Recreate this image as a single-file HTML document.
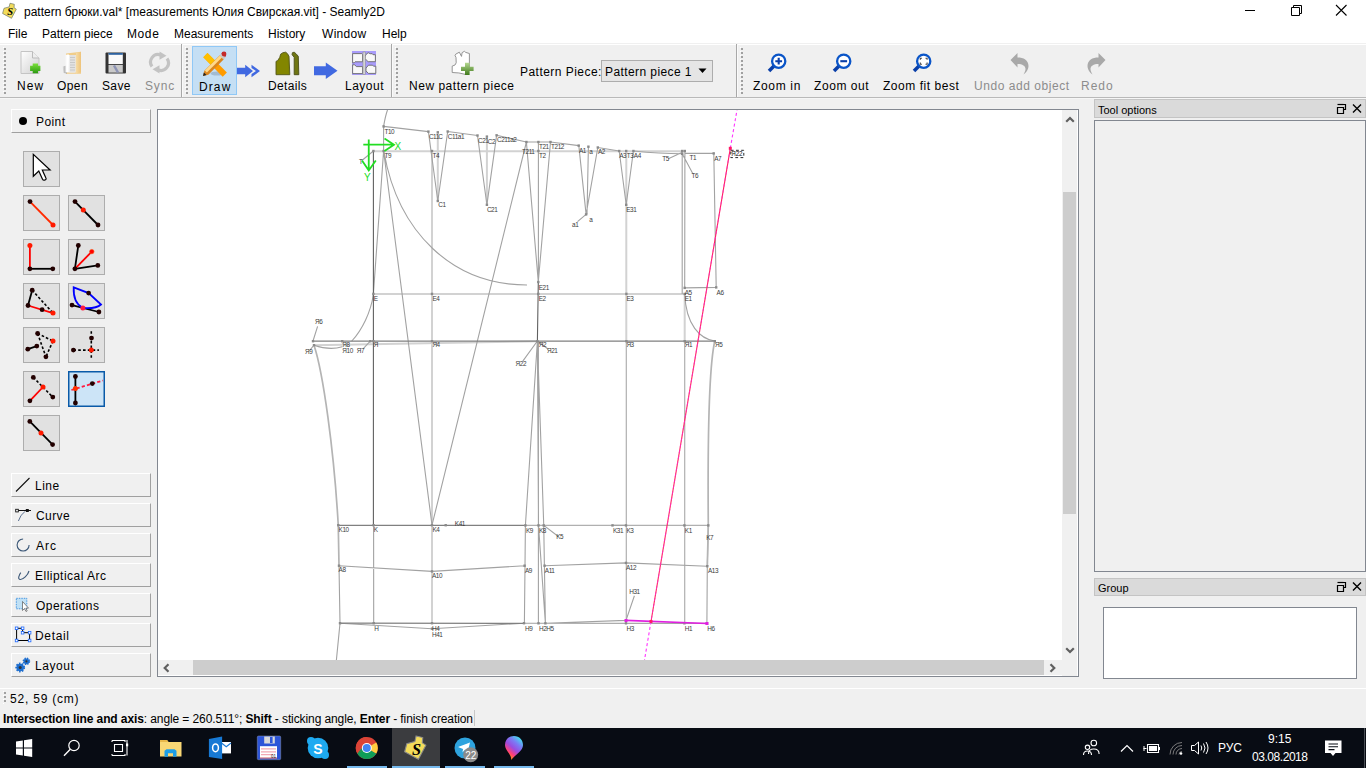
<!DOCTYPE html>
<html><head><meta charset="utf-8">
<style>
*{margin:0;padding:0;box-sizing:border-box}
html,body{width:1366px;height:768px;overflow:hidden;background:#f0f0f0;font-family:"Liberation Sans",sans-serif;font-size:12px;color:#000}
.a{position:absolute}
.t{position:absolute;white-space:nowrap;line-height:14px}
.btn{position:absolute;background:#f0f0f0;border-top:1px solid #fff;border-left:1px solid #fff;border-right:1px solid #a0a0a0;border-bottom:1px solid #a0a0a0}
.tb{position:absolute;width:37px;height:36px;background:#e1e1e1;border:1px solid #adadad}
.grip{position:absolute;width:3px;background-image:linear-gradient(135deg,#fff 0 1px,transparent 1px),linear-gradient(#a0a0a0 0 2px,transparent 2px);background-size:3px 4px,3px 4px;background-position:0 0,1px 1px;background-repeat:repeat-y}
.dock{position:absolute;background:#dadada;border:1px solid #c4c4c4}
</style></head><body>
<!-- title bar -->
<div class="a" style="left:0;top:0;width:1366px;height:43px;background:#fff"></div>
<div class="a" style="left:0;top:44px;width:1366px;height:1px;background:#fff"></div>
<div id="title" class="t" style="left:24px;top:5px">pattern брюки.val* [measurements Юлия Свирская.vit] - Seamly2D</div>
<!-- menu -->
<div class="t" style="left:8px;top:27px;letter-spacing:0px">File</div>
<div class="t" style="left:42px;top:27px">Pattern piece</div>
<div class="t" style="left:127px;top:27px;letter-spacing:0.6px">Mode</div>
<div class="t" style="left:174px;top:27px">Measurements</div>
<div class="t" style="left:268px;top:27px">History</div>
<div class="t" style="left:322px;top:27px;letter-spacing:0.3px">Window</div>
<div class="t" style="left:382px;top:27px">Help</div>
<!-- toolbar -->
<div class="a" style="left:0;top:97px;width:1366px;height:1px;background:#b9b9b9"></div>
<div class="a" style="left:0;top:98px;width:1366px;height:1px;background:#f6f6f6"></div>


<!-- toolbar grips & separators -->
<div class="grip" style="left:3px;top:47px;height:47px"></div>
<div class="a" style="left:181px;top:44px;width:1px;height:53px;background:#a8a8a8"></div>
<div class="a" style="left:182px;top:44px;width:1px;height:53px;background:#fafafa"></div>
<div class="grip" style="left:185px;top:47px;height:47px"></div>
<div class="a" style="left:391px;top:44px;width:1px;height:53px;background:#a8a8a8"></div>
<div class="a" style="left:392px;top:44px;width:1px;height:53px;background:#fafafa"></div>
<div class="grip" style="left:395px;top:47px;height:47px"></div>
<div class="a" style="left:736px;top:44px;width:1px;height:53px;background:#a8a8a8"></div>
<div class="a" style="left:737px;top:44px;width:1px;height:53px;background:#fafafa"></div>
<div class="grip" style="left:740px;top:47px;height:47px"></div>
<!-- draw highlight -->
<div class="a" style="left:192px;top:46px;width:45px;height:49px;background:#c5dff4;border:1px solid #90c8f6"></div>
<!-- toolbar labels -->
<div class="t" style="left:17px;top:79px;letter-spacing:1.1px">New</div>
<div class="t" style="left:57px;top:79px;letter-spacing:0.4px">Open</div>
<div class="t" style="left:102px;top:79px;letter-spacing:0.35px">Save</div>
<div class="t" style="left:145px;top:79px;color:#8c8c8c;letter-spacing:0.85px">Sync</div>
<div class="t" style="left:199px;top:80px;letter-spacing:1.1px">Draw</div>
<div class="t" style="left:268px;top:79px;letter-spacing:0.35px">Details</div>
<div class="t" style="left:345px;top:79px;letter-spacing:0.5px">Layout</div>
<div class="t" style="left:409px;top:79px;letter-spacing:0.52px">New pattern piece</div>
<div class="t" style="left:520px;top:65px;letter-spacing:0.46px">Pattern Piece:</div>
<div class="a" style="left:601px;top:60px;width:112px;height:22px;background:#e5e5e5;border:1px solid #adadad"></div>
<div class="t" style="left:605px;top:65px;letter-spacing:0.41px">Pattern piece 1</div>
<svg class="a" style="left:698px;top:68px" width="10" height="6"><path d="M0.5 0.5h8l-4 4.5z" fill="#000"/></svg>
<div class="t" style="left:753px;top:79px;letter-spacing:0.67px">Zoom in</div>
<div class="t" style="left:814px;top:79px;letter-spacing:0.57px">Zoom out</div>
<div class="t" style="left:883px;top:79px;letter-spacing:0.54px">Zoom fit best</div>
<div class="t" style="left:974px;top:79px;color:#8c8c8c;letter-spacing:0.55px">Undo add object</div>
<div class="t" style="left:1081px;top:79px;color:#8c8c8c;letter-spacing:1.0px">Redo</div>

<!-- icons -->
<svg class="a" style="left:18px;top:49px" width="26" height="28" viewBox="0 0 26 28">
 <defs><linearGradient id="pg" x1="0" y1="0" x2="1" y2="1"><stop offset="0" stop-color="#fff"/><stop offset="1" stop-color="#cfcfcf"/></linearGradient>
 <linearGradient id="gr" x1="0" y1="0" x2="0" y2="1"><stop offset="0" stop-color="#7be03a"/><stop offset="1" stop-color="#2c9a12"/></linearGradient></defs>
 <path d="M3 2.5h11.5l6.5 6.5v15.5h-18z" fill="url(#pg)" stroke="#c4c4c4" stroke-width="1"/>
 <path d="M14.5 2.5v6.5h6.5" fill="#eee" stroke="#bbb" stroke-width="1"/>
 <path d="M14.7 14.5h5.3v2.2h2.4v5.2h-2.4v2.3h-5.3v-2.3h-2.6v-5.2h2.6z" fill="url(#gr)"/>
</svg>
<svg class="a" style="left:58px;top:48px" width="28" height="30" viewBox="0 0 28 30">
 <defs><linearGradient id="fo" x1="0" y1="0" x2="1" y2="0"><stop offset="0" stop-color="#f6dca6"/><stop offset="1" stop-color="#eec37a"/></linearGradient>
 <linearGradient id="sh" x1="0" y1="0" x2="1" y2="0"><stop offset="0" stop-color="#e6e6e6"/><stop offset="1" stop-color="#8e8e8e"/></linearGradient></defs>
 <path d="M8 5.5L23 3.7V25.8H8z" fill="#f0cd8a"/>
 <path d="M4.5 18.5L9 17.5V25.5L5.5 25z" fill="url(#sh)"/>
 <path d="M7.4 7H17.6V24.5H7.4z" fill="#f7f7f7"/>
 <path d="M11.5 7H17.6V24.5H11.5z" fill="#e2e2e2"/>
 <path d="M12 9.5h5M12 12h5M12 14.5h5M12 17h5M12 19.5h5M12 22h5" stroke="#bdbdbd" stroke-width="0.7"/>
 <path d="M8.5 6.5L11 6.5L10 24L8.5 24z" fill="#fff"/>
 <path d="M18 5L23 3.7V24L18 26z" fill="url(#fo)"/>
</svg>
<svg class="a" style="left:105px;top:52px" width="22" height="22" viewBox="0 0 22 22">
 <rect x="0.5" y="0.5" width="20.5" height="21" rx="1" fill="#333"/>
 <rect x="3.5" y="1.3" width="14.3" height="10.8" fill="#fafafa"/>
 <rect x="3.5" y="1" width="14.3" height="1.8" fill="#2d62a0"/>
 <rect x="3.5" y="13" width="14.3" height="7.6" fill="#c9c9c9"/>
 <path d="M9 13.5l4 7" stroke="#8d94b5" stroke-width="2.5"/>
</svg>
<svg class="a" style="left:148px;top:50px" width="23" height="25" viewBox="0 0 23 25">
 <path d="M4 16.5A7.5 7.5 0 0 1 12.5 5" fill="none" stroke="#c3c3c3" stroke-width="3.2"/>
 <path d="M11.5 1.5l7 4.2-7 4z" fill="#c3c3c3"/>
 <path d="M19 8.5A7.5 7.5 0 0 1 10.5 20" fill="none" stroke="#c3c3c3" stroke-width="3.2"/>
 <path d="M11.5 23.5l-7-4.2 7-4z" fill="#c3c3c3"/>
</svg>
<svg class="a" style="left:202px;top:51px" width="26" height="26" viewBox="0 0 26 26">
 <ellipse cx="15" cy="22.5" rx="6.5" ry="2" fill="#7890a8" opacity="0.45"/>
 <path d="M1.3 6.3l4.2-4.2 19.4 19.4-4.2 4.2z" fill="#ff9c00"/>
 <path d="M1.3 6.3l4.2-4.2 9 9-4.2 4.2z" fill="#ffc000"/>
 <path d="M1 25l1.3-5.3 15.5-15.5 4 4-15.5 15.5z" fill="#d9851f"/>
 <path d="M2.8 19.5l15.3-15.3 2.1 2.1-15.3 15.3z" fill="#ffd98a"/>
 <path d="M1 25l0.9-3.5 2.6 2.6z" fill="#222"/>
 <path d="M17.5 4.5l2-2 4 4-2 2z" fill="#c8c8c8"/>
 <path d="M19.3 2.3q2-2 3.9-0.1t-0.1 3.9z" fill="#c42a2a"/>
 <circle cx="22" cy="3" r="2.4" fill="#c42a2a"/>
</svg>
<svg class="a" style="left:237px;top:64px" width="24" height="14" viewBox="0 0 24 14">
 <path d="M0 3.8h8.2v-3l7.8 6.2-7.8 6.2v-3h-8.2z" fill="#4169e1"/>
 <path d="M14.5 0.8l8.5 6.2-8.5 6.2v-3.2l4.5-3-4.5-3z" fill="#4169e1"/>
</svg>
<svg class="a" style="left:274px;top:50px" width="27" height="27" viewBox="274 50 27 27">
 <path d="M276 74.7V61.4L277.7 60.6L279.8 57.3L280.6 54.2L282.9 52.7L285.7 52.2L287.5 53.7L289 56.3L289.8 74.7z" fill="#7e8200" stroke="#55581a" stroke-width="0.9"/>
 <path d="M277 74V62L280.5 58.5L281.5 55L283.5 53.5L285.5 53.5L287.5 56L288.5 74z" fill="#838600"/>
 <path d="M294.2 74.7V57.3L292.1 54.7L292.4 52.7L294.2 52.2L296 53.7L298.3 56.3L298.8 74.7z" fill="#6f7512" stroke="#4a4e1a" stroke-width="0.9"/>
</svg>
<svg class="a" style="left:313px;top:62px" width="26" height="18" viewBox="0 0 26 18">
 <path d="M1 4.2h11.8v-3.7l11.7 8.2-11.7 8.3v-3.8h-11.8z" fill="#4169e1"/>
</svg>
<svg class="a" style="left:352px;top:51px" width="25" height="25" viewBox="0 0 25 25">
 <rect x="0" y="0" width="24" height="24" fill="#a99cfb"/>
 <path d="M0.6 2.6h9.2l0.8 1v7.2h-7.5l-1 1h-1.5z" fill="#f8f8f8" stroke="#6a6a6a" stroke-width="0.9"/>
 <path d="M0.6 13.8h2.2l1.5 1.8h6.3v7h-10z" fill="#f8f8f8" stroke="#6a6a6a" stroke-width="0.9"/>
 <path d="M14 3.5l2.2-1.8 2 1h2l0.8 1h2.4v7h-7.2l-2-1.8 -1.2-1.2v-2z" fill="#f8f8f8" stroke="#6a6a6a" stroke-width="0.9"/>
 <path d="M14 17l2.5-2.8h4l1 1h2.3v7.2h-7.5l-2.3-2.5z" fill="#f8f8f8" stroke="#6a6a6a" stroke-width="0.9"/>
 <rect x="11" y="1" width="2.2" height="22.5" fill="#dcdcdc" stroke="#8a8a8a" stroke-width="0.6"/>
</svg>
<svg class="a" style="left:451px;top:50px" width="24" height="26" viewBox="0 0 24 26">
 <defs><linearGradient id="gr2" x1="0" y1="0" x2="0" y2="1"><stop offset="0" stop-color="#b5d890"/><stop offset="1" stop-color="#3f7a1c"/></linearGradient></defs>
 <path d="M1.2 22.5V16.1L4 15L5.2 12.8L5 7.5L4 5.3L4.7 4.2L8.3 2.2L10.5 6.4L11.1 2.6L13.4 1.3L14.7 2.4L18.4 3.5V17L14 24.3Q8 22.5 1.2 22.5z" fill="#fff" stroke="#8a8a8a" stroke-width="0.9"/>
 <path d="M14 12.8h4.6v4h4v4.1h-4v4h-4.6v-4h-4v-4.1h4z" fill="url(#gr2)"/>
</svg>
<svg class="a" style="left:766px;top:52px" width="24" height="22" viewBox="0 0 24 22">
 <path d="M9 13l-6 6" stroke="#0a3fa8" stroke-width="3.6" stroke-linecap="butt"/>
 <circle cx="12.7" cy="9.2" r="6.6" fill="#fff" stroke="#0a55c8" stroke-width="2.3"/>
 <path d="M9.3 9.2h6.8M12.7 5.8v6.8" stroke="#0a3fa8" stroke-width="2.1"/>
</svg>
<svg class="a" style="left:831px;top:52px" width="24" height="22" viewBox="0 0 24 22">
 <path d="M9 13l-6 6" stroke="#0a3fa8" stroke-width="3.6"/>
 <circle cx="12.7" cy="9.2" r="6.6" fill="#fff" stroke="#0a55c8" stroke-width="2.3"/>
 <path d="M9.3 9.2h6.8" stroke="#0a3fa8" stroke-width="2.1"/>
</svg>
<svg class="a" style="left:911px;top:52px" width="24" height="22" viewBox="0 0 24 22">
 <path d="M9 13l-6 6" stroke="#0a3fa8" stroke-width="3.6"/>
 <circle cx="12.7" cy="9.2" r="6.6" fill="#fff" stroke="#0a55c8" stroke-width="2.3"/>
 <path d="M9.3 7.8v-1.6h1.6M14.5 6.2h1.6v1.6M16.1 10.6v1.6h-1.6M10.9 12.2h-1.6v-1.6" fill="none" stroke="#444" stroke-width="1.1"/>
</svg>
<svg class="a" style="left:1009px;top:52px" width="22" height="23" viewBox="0 0 22 23">
 <path d="M1.5 8l7-7v4.5c6 0 11 2.5 11 8.5 0 3.5-2.5 6.8-5 8.5 1.2-2 2-4 2-5.5 0-3-3-5-8-5v3.5z" fill="#a9a9a9"/>
</svg>
<svg class="a" style="left:1085px;top:52px" width="22" height="23" viewBox="0 0 22 23">
 <path d="M20.5 8l-7-7v4.5c-6 0-11 2.5-11 8.5 0 3.5 2.5 6.8 5 8.5-1.2-2-2-4-2-5.5 0-3 3-5 8-5v3.5z" fill="#a9a9a9"/>
</svg>

<!-- left panel -->

<div class="btn" style="left:11px;top:109px;width:140px;height:24px"></div>
<div class="a" style="left:19px;top:117px;width:8px;height:8px;border-radius:50%;background:#000"></div>
<div class="t" style="left:36px;top:115px;letter-spacing:0.42px">Point</div>
<div class="tb" style="left:23px;top:151px;"><svg class="a" style="left:-1px;top:-1px" width="37" height="36" viewBox="0 0 37 36"><path d="M10.3 3.3v22l5.5-5.3 3.7 8.2q0.8 1.5 2.5 0.8t0.8-2.3l-3.5-7.7h7.8z" fill="#fff" stroke="#000" stroke-width="1.2" stroke-linejoin="miter"/></svg></div>
<div class="tb" style="left:23px;top:195px;"><svg class="a" style="left:-1px;top:-1px" width="37" height="36" viewBox="0 0 37 36"><path d="M7 6.6L30 30" stroke="#ff2a00" stroke-width="1.8"/><circle cx="7" cy="6.6" r="2.4" fill="#200"/><circle cx="30" cy="30" r="2.5" fill="#ff1a00"/></svg></div>
<div class="tb" style="left:68px;top:195px;"><svg class="a" style="left:-1px;top:-1px" width="37" height="36" viewBox="0 0 37 36"><path d="M7 6.6L30 30" stroke="#000" stroke-width="1.8"/><circle cx="7" cy="6.6" r="2.4" fill="#200"/><circle cx="30" cy="30" r="2.4" fill="#200"/><circle cx="15.3" cy="15.1" r="2.5" fill="#ff1a00"/></svg></div>
<div class="tb" style="left:23px;top:239px;"><svg class="a" style="left:-1px;top:-1px" width="37" height="36" viewBox="0 0 37 36"><path d="M6.9 6.5V29.8" stroke="#f00" stroke-width="1.8"/><path d="M6.9 29.8H29.8" stroke="#000" stroke-width="1.8"/><circle cx="6.9" cy="6.5" r="2.5" fill="#ff1a00"/><circle cx="6.9" cy="29.8" r="2.4" fill="#200"/><circle cx="29.8" cy="29.8" r="2.4" fill="#200"/></svg></div>
<div class="tb" style="left:68px;top:239px;"><svg class="a" style="left:-1px;top:-1px" width="37" height="36" viewBox="0 0 37 36"><path d="M6.9 29.8L10.3 6.5M6.9 29.8L29.8 26.4" stroke="#000" stroke-width="1.8"/><path d="M6.9 29.8L23.8 12.6" stroke="#f00" stroke-width="1.8"/><circle cx="10.3" cy="6.5" r="2.4" fill="#200"/><circle cx="29.8" cy="26.4" r="2.4" fill="#200"/><circle cx="6.9" cy="29.8" r="2.4" fill="#200"/><circle cx="23.8" cy="12.6" r="2.2" fill="#f00" stroke="#f40" stroke-width="0.6"/></svg></div>
<div class="tb" style="left:23px;top:283px;"><svg class="a" style="left:-1px;top:-1px" width="37" height="36" viewBox="0 0 37 36"><path d="M9.2 7.2L5 22.5" stroke="#000" stroke-width="1.8"/><path d="M5 22.5L30 30.1" stroke="#f00" stroke-width="1.8"/><path d="M9.2 7.2L30 30.1" stroke="#000" stroke-width="1.6" stroke-dasharray="2.6 2"/><circle cx="9.2" cy="7.2" r="2.4" fill="#200"/><circle cx="5" cy="22.5" r="2.4" fill="#200"/><circle cx="19.1" cy="26.7" r="2.4" fill="#200"/><circle cx="30" cy="30.1" r="2.5" fill="#ff1a00"/></svg></div>
<div class="tb" style="left:68px;top:283px;"><svg class="a" style="left:-1px;top:-1px" width="37" height="36" viewBox="0 0 37 36"><path d="M4 22.1L30.9 29" stroke="#000" stroke-width="1.8"/><path d="M5.7 4.4L20.6 10.1L33 21.5Q28 26 14.9 25Q5 20 5.7 4.4z" fill="none" stroke="#00f" stroke-width="1.8"/><circle cx="20.6" cy="10.1" r="2.4" fill="#200"/><circle cx="4" cy="22.1" r="2.4" fill="#200"/><circle cx="30.9" cy="29" r="2.4" fill="#200"/><circle cx="14.9" cy="25" r="2.5" fill="#ff1a40"/></svg></div>
<div class="tb" style="left:23px;top:327px;"><svg class="a" style="left:-1px;top:-1px" width="37" height="36" viewBox="0 0 37 36"><path d="M4.8 22.2L13.8 19.1" stroke="#000" stroke-width="1.8"/><path d="M14.6 6.5L30 14M14.6 6.5L22.9 29.8M30 14L22.9 29.8" stroke="#000" stroke-width="1.6" stroke-dasharray="2.6 2"/><circle cx="14.6" cy="6.5" r="2.4" fill="#200"/><circle cx="13.8" cy="19.1" r="2.4" fill="#200"/><circle cx="4.8" cy="22.2" r="2.4" fill="#200"/><circle cx="22.9" cy="29.8" r="2.4" fill="#200"/><circle cx="30" cy="14" r="2.5" fill="#ff1a00"/></svg></div>
<div class="tb" style="left:68px;top:327px;"><svg class="a" style="left:-1px;top:-1px" width="37" height="36" viewBox="0 0 37 36"><path d="M5.4 23.1H30.9M23.3 4.2V31.2" stroke="#000" stroke-width="1.6" stroke-dasharray="2.6 2.2"/><circle cx="23.5" cy="11.1" r="2.4" fill="#200"/><circle cx="5.4" cy="23.1" r="2.4" fill="#200"/><circle cx="23.3" cy="23.1" r="2.5" fill="#ff1a00"/></svg></div>
<div class="tb" style="left:23px;top:371px;"><svg class="a" style="left:-1px;top:-1px" width="37" height="36" viewBox="0 0 37 36"><path d="M10.3 6.4L29.8 26.1" stroke="#000" stroke-width="1.6" stroke-dasharray="2.6 2"/><path d="M6.9 29.8L20 16" stroke="#f00" stroke-width="1.8"/><circle cx="10.3" cy="6.4" r="2.4" fill="#200"/><circle cx="29.8" cy="26.1" r="2.4" fill="#200"/><circle cx="6.9" cy="29.8" r="2.4" fill="#200"/><circle cx="20" cy="16" r="2.5" fill="#ff1a00"/></svg></div>
<div class="tb" style="left:68px;top:371px;background:#cce4f7;border:1px solid #0a5aa8;box-shadow:inset 0 0 0 0.5px #0a5aa8"><svg class="a" style="left:-1px;top:-1px" width="37" height="36" viewBox="0 0 37 36"><path d="M7.4 5.5V32" stroke="#000" stroke-width="1.8"/><path d="M3.4 19L35 9.5" stroke="#ff1a40" stroke-width="1.8" stroke-dasharray="3.2 2.2"/><circle cx="7.4" cy="5.5" r="2.4" fill="#200"/><circle cx="7.4" cy="32" r="2.4" fill="#200"/><circle cx="24.3" cy="12.6" r="2.4" fill="#200"/><circle cx="7.4" cy="17.5" r="2.5" fill="#ff3000"/></svg></div>
<div class="tb" style="left:23px;top:415px;"><svg class="a" style="left:-1px;top:-1px" width="37" height="36" viewBox="0 0 37 36"><path d="M6.8 6.4L29.6 29.6" stroke="#000" stroke-width="1.8"/><circle cx="6.8" cy="6.4" r="2.4" fill="#200"/><circle cx="29.6" cy="29.6" r="2.4" fill="#200"/><circle cx="18" cy="18" r="2.5" fill="#ff1a00"/></svg></div>
<div class="btn" style="left:11px;top:473px;width:140px;height:24px"></div>
<div class="btn" style="left:11px;top:503px;width:140px;height:24px"></div>
<div class="btn" style="left:11px;top:533px;width:140px;height:24px"></div>
<div class="btn" style="left:11px;top:563px;width:140px;height:24px"></div>
<div class="btn" style="left:11px;top:593px;width:140px;height:24px"></div>
<div class="btn" style="left:11px;top:623px;width:140px;height:24px"></div>
<div class="btn" style="left:11px;top:653px;width:140px;height:24px"></div>
<div class="t" style="left:35px;top:479px;letter-spacing:0.5px">Line</div>
<div class="t" style="left:36px;top:509px;letter-spacing:0.42px">Curve</div>
<div class="t" style="left:36px;top:539px;letter-spacing:1.0px">Arc</div>
<div class="t" style="left:35px;top:569px;letter-spacing:0.48px">Elliptical Arc</div>
<div class="t" style="left:36px;top:599px;letter-spacing:0.48px">Operations</div>
<div class="t" style="left:35px;top:629px;letter-spacing:0.66px">Detail</div>
<div class="t" style="left:35px;top:659px;letter-spacing:0.58px">Layout</div>
<svg class="a" style="left:12px;top:474px" width="22" height="200" viewBox="0 0 22 200">
 <path d="M4 17.5L17.5 4" stroke="#111" stroke-width="1.1"/>
 <path d="M6 36.5H19" stroke="#111" stroke-width="1"/><rect x="3.7" y="35.3" width="2.6" height="2.6" fill="#fff" stroke="#111" stroke-width="0.9"/><rect x="13.8" y="35" width="3" height="3" fill="#111"/>
 <path d="M12.9 37.6Q8.5 40.5 6.4 47" fill="none" stroke="#5a7090" stroke-width="1"/>
 <path d="M11.1 65A6 6 0 1 0 17.1 71" fill="none" stroke="#3c5878" stroke-width="1.1"/>
 <path d="M17 97C16 101 11 106 8 105.5C5.5 105 7 101 8.8 98.6" fill="none" stroke="#3c5878" stroke-width="1.1"/>
 <rect x="4.3" y="124.3" width="10.5" height="10.5" fill="#bfe0f5" stroke="#3a8ee0" stroke-width="0.9" stroke-dasharray="1.5 1"/>
 <path d="M10.5 127.5v9l2-2 1.5 3 1.2-0.6-1.4-2.8h2.7z" fill="#fff" stroke="#555" stroke-width="0.7"/>
 <path d="M4.6 154.3h6v4.4h7v7.8h-13z" fill="none" stroke="#000" stroke-width="1"/>
 <g fill="#fff" stroke="#1a66ff" stroke-width="0.8"><rect x="3.3" y="153" width="2.6" height="2.6"/><rect x="9.3" y="153" width="2.6" height="2.6"/><rect x="9.3" y="157.4" width="2.6" height="2.6"/><rect x="16.3" y="157.4" width="2.6" height="2.6"/><rect x="16.3" y="165.2" width="2.6" height="2.6"/><rect x="3.3" y="165.2" width="2.6" height="2.6"/></g>
 <circle cx="8.2" cy="193.5" r="3.8" fill="#1f6fcf" stroke="#1f6fcf" stroke-width="2.2" stroke-dasharray="1.5 1.2"/><circle cx="8.2" cy="193.5" r="1.5" fill="#333"/>
 <circle cx="14.4" cy="187.3" r="2.9" fill="#1f6fcf" stroke="#1f6fcf" stroke-width="1.8" stroke-dasharray="1.3 1"/><circle cx="14.4" cy="187.3" r="1.1" fill="#333"/>
</svg>

<!-- canvas frame -->
<div class="a" style="left:157px;top:109px;width:922px;height:568px;border:1px solid #828790;background:#fff"></div>
<div id="canvas" class="a" style="left:158px;top:110px;width:904px;height:550px;overflow:hidden"><svg id="draw" width="904" height="550" viewBox="158 110 904 550" style="display:block"><path d="M373.4 151.2 L684.8 151.2 M373.4 293.9 L684.7 293.9 M314.0 345.2 L537.4 341.2 M432.0 151.0 L432.0 623.3 M626.3 151.0 L626.3 341.0 M437.8 132.3 L437.8 201.0 M486.9 136.6 L486.9 204.8 M684.7 294.0 L684.7 341.0" fill="none" stroke="#d2d2d2" stroke-width="2"/>
<path d="M626.3 341.0 L626.3 620.4 M684.7 341.0 L684.7 623.3 M524.0 525.4 L708.3 525.4" fill="none" stroke="#b0b0b0" stroke-width="1.2"/>
<path d="M588.4 146.7 L587.0 214.4 M586.1 214.4 L577.5 221.7 M682.2 151.0 L682.2 294.0 M684.9 151.0 L684.7 287.9 M713.8 153.4 L716.2 287.4 M684.7 287.9 L716.2 287.4 M668.3 158.8 L681.9 152.5 M538.4 142.0 L538.4 282.0 M524.4 623.3 L706.9 623.4 M340.0 623.2 L432.0 628.7 L524.0 623.2 M339.0 565.7 L432.0 571.4 L524.6 565.7 M544.6 565.7 L626.0 562.9 L707.3 566.2 M545.4 623.3 L626.0 620.4 M538.4 341.0 L538.4 623.3 M383.6 151.0 L383.6 126.4 M383.6 126.4 L428.4 131.6 M428.4 131.6 L437.8 201.0 L447.7 131.5 M447.7 131.5 L477.5 135.5 M477.5 135.5 L486.9 204.8 L496.6 135.3 M496.6 135.3 L526.4 142.0 L538.4 142.0 L550.5 142.0 L578.8 145.6 M578.8 145.6 L586.1 214.4 L597.8 147.5 M597.8 147.5 L619.2 151.0 M619.2 151.0 L626.2 204.8 L633.4 151.0 M682.2 153.8 L693.0 174.0 M684.8 153.2 L713.8 153.4 M526.4 142.0 L432.0 525.2 M383.6 151.0 L432.0 525.2 M383.6 151.0 L373.4 294.0 M526.4 142.0 L538.3 282.0 M550.5 142.0 L538.3 282.0 M537.4 341.0 L522.8 361.1 M537.4 341.0 L548.0 349.0 M543.8 525.4 L558.3 536.5 M313.0 341.0 L317.6 326.4 M370.3 341.0 L363.3 348.7 M314.0 345.0 L310.2 349.8 M373.4 151.0 L362.5 160.0 M626.0 620.4 L634.4 595.8 M612.5 525.4 L626.0 525.4 M383.6 126.4 C385 118 386 114 387.5 110 M384 152 C398 232 452 285 527 285 M633.4 151 C650 152.6 665 153.6 682.2 153.75 M351.6 341.25 C362 330 371 312 373.4 294 M314 345.2 C325 349 335 349 342.2 346.7 M684.7 294 C686 325 700 339 714.8 341 M339 565.7 L340 623.2 L336.2 662 M708.3 525.2 L707.3 566.25 L706.9 623.5 M537.4 341 L525.4 525.4 L525 566 L524.4 623.3 M537.4 341 L543.75 525.4 L544.4 566 L545.4 623.3 M538.5 525.4 L545.4 623.3 M537.4 341 L538.5 525.4 M373.6 525.4 L373.7 623.3" fill="none" stroke="#a2a2a2" stroke-width="1.1"/>
<path d="M338.2 525.4 L524.0 525.4 M340.0 623.2 L524.4 623.3 M312.9 341.2 L714.8 341.2" fill="none" stroke="#808080" stroke-width="1.25"/>
<path d="M373.4 151.0 L373.4 525.4 M538.3 282.0 L537.4 341.0" fill="none" stroke="#606060" stroke-width="1.1"/>
<path d="M314 345.2 C323 372 334 450 338.25 525.2 L339 565.7 M714.8 341 C710 362 707.5 430 708.3 525.2 L707.3 566.25" fill="none" stroke="#b4b4b4" stroke-width="1.7"/>
<rect x="372.2" y="149.8" width="2.4" height="2.4" fill="#8a8a8a"/><rect x="382.4" y="149.8" width="2.4" height="2.4" fill="#8a8a8a"/><rect x="382.4" y="125.2" width="2.4" height="2.4" fill="#8a8a8a"/><rect x="427.2" y="130.4" width="2.4" height="2.4" fill="#8a8a8a"/><rect x="436.6" y="131.1" width="2.4" height="2.4" fill="#8a8a8a"/><rect x="446.5" y="130.3" width="2.4" height="2.4" fill="#8a8a8a"/><rect x="430.8" y="149.8" width="2.4" height="2.4" fill="#8a8a8a"/><rect x="436.6" y="199.8" width="2.4" height="2.4" fill="#8a8a8a"/><rect x="476.3" y="134.3" width="2.4" height="2.4" fill="#8a8a8a"/><rect x="485.7" y="135.4" width="2.4" height="2.4" fill="#8a8a8a"/><rect x="495.4" y="134.1" width="2.4" height="2.4" fill="#8a8a8a"/><rect x="525.2" y="140.8" width="2.4" height="2.4" fill="#8a8a8a"/><rect x="537.2" y="140.8" width="2.4" height="2.4" fill="#8a8a8a"/><rect x="549.3" y="140.8" width="2.4" height="2.4" fill="#8a8a8a"/><rect x="577.5" y="144.4" width="2.4" height="2.4" fill="#8a8a8a"/><rect x="587.2" y="145.5" width="2.4" height="2.4" fill="#8a8a8a"/><rect x="596.6" y="146.3" width="2.4" height="2.4" fill="#8a8a8a"/><rect x="485.7" y="203.6" width="2.4" height="2.4" fill="#8a8a8a"/><rect x="584.9" y="213.2" width="2.4" height="2.4" fill="#8a8a8a"/><rect x="537.2" y="149.8" width="2.4" height="2.4" fill="#8a8a8a"/><rect x="618.0" y="149.8" width="2.4" height="2.4" fill="#8a8a8a"/><rect x="625.0" y="149.8" width="2.4" height="2.4" fill="#8a8a8a"/><rect x="632.2" y="149.8" width="2.4" height="2.4" fill="#8a8a8a"/><rect x="625.0" y="203.6" width="2.4" height="2.4" fill="#8a8a8a"/><rect x="681.0" y="149.8" width="2.4" height="2.4" fill="#8a8a8a"/><rect x="683.6" y="149.8" width="2.4" height="2.4" fill="#8a8a8a"/><rect x="712.5" y="152.2" width="2.4" height="2.4" fill="#8a8a8a"/><rect x="681.0" y="152.6" width="2.4" height="2.4" fill="#8a8a8a"/><rect x="372.2" y="292.7" width="2.4" height="2.4" fill="#8a8a8a"/><rect x="430.8" y="292.7" width="2.4" height="2.4" fill="#8a8a8a"/><rect x="537.1" y="292.7" width="2.4" height="2.4" fill="#8a8a8a"/><rect x="537.1" y="280.8" width="2.4" height="2.4" fill="#8a8a8a"/><rect x="625.2" y="292.7" width="2.4" height="2.4" fill="#8a8a8a"/><rect x="683.5" y="292.7" width="2.4" height="2.4" fill="#8a8a8a"/><rect x="683.5" y="286.7" width="2.4" height="2.4" fill="#8a8a8a"/><rect x="715.0" y="286.2" width="2.4" height="2.4" fill="#8a8a8a"/><rect x="311.8" y="340.0" width="2.4" height="2.4" fill="#8a8a8a"/><rect x="341.0" y="340.0" width="2.4" height="2.4" fill="#8a8a8a"/><rect x="369.1" y="340.0" width="2.4" height="2.4" fill="#8a8a8a"/><rect x="372.2" y="340.0" width="2.4" height="2.4" fill="#8a8a8a"/><rect x="430.8" y="340.0" width="2.4" height="2.4" fill="#8a8a8a"/><rect x="536.2" y="340.0" width="2.4" height="2.4" fill="#8a8a8a"/><rect x="625.2" y="340.0" width="2.4" height="2.4" fill="#8a8a8a"/><rect x="683.5" y="340.0" width="2.4" height="2.4" fill="#8a8a8a"/><rect x="713.6" y="340.0" width="2.4" height="2.4" fill="#8a8a8a"/><rect x="312.8" y="344.0" width="2.4" height="2.4" fill="#8a8a8a"/><rect x="337.1" y="524.0" width="2.4" height="2.4" fill="#8a8a8a"/><rect x="372.4" y="524.0" width="2.4" height="2.4" fill="#8a8a8a"/><rect x="430.8" y="524.0" width="2.4" height="2.4" fill="#8a8a8a"/><rect x="444.5" y="524.0" width="2.4" height="2.4" fill="#8a8a8a"/><rect x="524.2" y="524.2" width="2.4" height="2.4" fill="#8a8a8a"/><rect x="537.3" y="524.2" width="2.4" height="2.4" fill="#8a8a8a"/><rect x="542.5" y="524.2" width="2.4" height="2.4" fill="#8a8a8a"/><rect x="611.3" y="524.2" width="2.4" height="2.4" fill="#8a8a8a"/><rect x="624.8" y="524.2" width="2.4" height="2.4" fill="#8a8a8a"/><rect x="683.2" y="524.2" width="2.4" height="2.4" fill="#8a8a8a"/><rect x="707.1" y="524.2" width="2.4" height="2.4" fill="#8a8a8a"/><rect x="337.8" y="564.5" width="2.4" height="2.4" fill="#8a8a8a"/><rect x="430.8" y="570.2" width="2.4" height="2.4" fill="#8a8a8a"/><rect x="523.4" y="564.5" width="2.4" height="2.4" fill="#8a8a8a"/><rect x="543.4" y="564.5" width="2.4" height="2.4" fill="#8a8a8a"/><rect x="624.8" y="561.7" width="2.4" height="2.4" fill="#8a8a8a"/><rect x="706.1" y="565.0" width="2.4" height="2.4" fill="#8a8a8a"/><rect x="338.8" y="622.0" width="2.4" height="2.4" fill="#8a8a8a"/><rect x="372.5" y="622.0" width="2.4" height="2.4" fill="#8a8a8a"/><rect x="430.8" y="622.0" width="2.4" height="2.4" fill="#8a8a8a"/><rect x="522.8" y="622.0" width="2.4" height="2.4" fill="#8a8a8a"/><rect x="537.3" y="622.1" width="2.4" height="2.4" fill="#8a8a8a"/><rect x="544.2" y="622.1" width="2.4" height="2.4" fill="#8a8a8a"/><rect x="624.8" y="622.1" width="2.4" height="2.4" fill="#8a8a8a"/><rect x="683.2" y="622.1" width="2.4" height="2.4" fill="#8a8a8a"/><rect x="705.7" y="622.3" width="2.4" height="2.4" fill="#8a8a8a"/><rect x="430.8" y="627.5" width="2.4" height="2.4" fill="#8a8a8a"/>
<g font-family="Liberation Sans" font-size="6.4" fill="#3a3a3a" letter-spacing="-0.4"><text x="384.4" y="133.5">T10</text><text x="428.9" y="138.7">C11</text><text x="438.3" y="138.7">C</text><text x="447.8" y="138.7">C11a1</text><text x="432.5" y="157.8">T4</text><text x="384.4" y="157.8">T9</text><text x="359.0" y="163.7">T</text><text x="438.3" y="207.4">C1</text><text x="478.0" y="142.9">C21</text><text x="487.7" y="143.7">C2</text><text x="497.0" y="142.0">C211a2</text><text x="522.0" y="153.8">T211</text><text x="538.9" y="148.7">T21</text><text x="551.0" y="148.7">T212</text><text x="538.9" y="157.8">T2</text><text x="579.0" y="153.0">A1</text><text x="589.2" y="154.3">a</text><text x="598.0" y="154.3">A2</text><text x="486.9" y="212.0">C21</text><text x="572.0" y="226.8">a1</text><text x="589.2" y="221.8">a</text><text x="619.2" y="157.8">A3</text><text x="626.7" y="157.8">T3</text><text x="633.8" y="157.8">A4</text><text x="662.2" y="161.2">T5</text><text x="689.5" y="159.6">T1</text><text x="691.6" y="178.4">T6</text><text x="714.2" y="160.6">A7</text><text x="626.2" y="212.0">E31</text><text x="373.8" y="300.5">E</text><text x="432.4" y="300.5">E4</text><text x="315.0" y="324.2">Я6</text><text x="305.1" y="353.9">Я9</text><text x="342.3" y="347.3">Я8</text><text x="342.3" y="353.3">Я10</text><text x="356.8" y="353.3">Я7</text><text x="373.8" y="347.3">Я</text><text x="432.4" y="347.3">Я4</text><text x="538.7" y="289.6">E21</text><text x="538.7" y="300.5">E2</text><text x="538.7" y="347.3">Я2</text><text x="547.0" y="353.3">Я21</text><text x="515.6" y="366.0">Я22</text><text x="684.7" y="294.5">A5</text><text x="716.6" y="294.5">A6</text><text x="626.4" y="300.5">E3</text><text x="684.7" y="300.5">E1</text><text x="626.4" y="347.3">Я3</text><text x="684.7" y="347.3">Я1</text><text x="715.1" y="347.3">Я5</text><text x="338.6" y="532.3">K10</text><text x="373.8" y="532.3">K</text><text x="432.4" y="532.3">K4</text><text x="454.8" y="526.0">K41</text><text x="338.6" y="572.4">A8</text><text x="432.0" y="578.4">A10</text><text x="526.0" y="532.5">K9</text><text x="539.0" y="532.5">K8</text><text x="556.2" y="538.8">K5</text><text x="612.9" y="532.5">K31</text><text x="626.5" y="532.5">K3</text><text x="684.8" y="532.5">K1</text><text x="706.2" y="539.8">K7</text><text x="525.0" y="572.8">A9</text><text x="544.8" y="572.8">A11</text><text x="626.0" y="569.6">A12</text><text x="707.9" y="572.8">A13</text><text x="629.2" y="593.6">H31</text><text x="525.0" y="630.5">H9</text><text x="539.0" y="630.5">H2H5</text><text x="626.5" y="630.5">H3</text><text x="684.8" y="630.5">H1</text><text x="707.3" y="630.5">H6</text><text x="374.2" y="631.0">H</text><text x="432.0" y="631.0">H4</text><text x="432.0" y="636.7">H41</text></g>
<path d="M730.3 148.3 L651 621.5" stroke="#ff2060" stroke-width="1.1"/><path d="M730.3 148.3 L651 621.5" stroke="#ff30c0" stroke-width="0.8" stroke-dasharray="3 3"/>
<path d="M730.3 148.3 L737 110 M651 621.5 L644.5 660" stroke="#ff33ff" stroke-width="1.1" stroke-dasharray="3 2.5"/>
<path d="M626 620.4 L706.9 623.5" stroke="#e020e0" stroke-width="1.6"/>
<rect x="624.5" y="619" width="3" height="3" fill="#e020e0"/><rect x="705.5" y="622" width="3" height="3" fill="#e020e0"/><rect x="649.5" y="620" width="3" height="3" fill="#ff1a66"/>
<rect x="728.8" y="146.8" width="3" height="3" fill="#ff1a66"/>
<text x="731.3" y="156.3" font-family="Liberation Sans" font-size="6.3" fill="#111" letter-spacing="-0.2">Я22</text>
<rect x="730.8" y="150.3" width="13" height="7.3" fill="none" stroke="#111" stroke-width="0.9" stroke-dasharray="2.8 2.4"/>
<g stroke="#22dd22" stroke-width="1.8" fill="none">
<path d="M363.3 144.7 H394 M384.5 138.5 L394 144.7 L384.5 151"/>
<path d="M368.75 139.4 V170.5 M362 160.5 L368.75 170.5 L375.8 160.5"/>
</g>
<text x="394.5" y="149.5" font-family="Liberation Sans" font-size="10" fill="#22dd22">X</text>
<text x="364" y="181" font-family="Liberation Sans" font-size="10" fill="#22dd22">Y</text>
</svg></div>
<!-- v scrollbar -->
<div class="a" style="left:1062px;top:110px;width:15px;height:566px;background:#f0f0f0"></div>
<div class="a" style="left:1063px;top:192px;width:13px;height:322px;background:#cdcdcd"></div>
<svg class="a" style="left:1065px;top:116px" width="10" height="7"><path d="M1.2 5.8l3.8-3.8 3.8 3.8" fill="none" stroke="#606060" stroke-width="2.2"/></svg>
<svg class="a" style="left:1065px;top:647px" width="10" height="7"><path d="M1.2 1.2l3.8 3.8 3.8-3.8" fill="none" stroke="#606060" stroke-width="2.2"/></svg>
<!-- h scrollbar -->
<div class="a" style="left:158px;top:660px;width:904px;height:15px;background:#f0f0f0"></div>
<div class="a" style="left:193px;top:660px;width:851px;height:15px;background:#cdcdcd"></div>
<svg class="a" style="left:162px;top:663px" width="8" height="10"><path d="M6.5 1.2l-3.8 3.8 3.8 3.8" fill="none" stroke="#606060" stroke-width="2.2"/></svg>
<svg class="a" style="left:1049px;top:663px" width="8" height="10"><path d="M1.5 1.2l3.8 3.8-3.8 3.8" fill="none" stroke="#606060" stroke-width="2.2"/></svg>

<!-- right docks -->
<div class="dock" style="left:1094px;top:99px;width:272px;height:19px"></div>
<div class="t" style="left:1098px;top:103px;font-size:11px">Tool options</div>
<svg class="a" style="left:1336px;top:103px" width="30" height="12" viewBox="0 0 30 12">
 <path d="M3.5 1.5h6v5h-2M1.5 4.5h6v6h-6z" fill="none" stroke="#000" stroke-width="1.2"/>
 <path d="M1.5 1.5h6" stroke="#000" stroke-width="1.2"/>
 <path d="M17 1.5l8 8M25 1.5l-8 8" stroke="#000" stroke-width="1.4"/>
</svg>
<div class="a" style="left:1094px;top:120px;width:272px;height:452px;border:1px solid #828790"></div>
<div class="dock" style="left:1094px;top:578px;width:272px;height:18px"></div>
<div class="t" style="left:1098px;top:581px;font-size:11px">Group</div>
<svg class="a" style="left:1336px;top:581px" width="30" height="12" viewBox="0 0 30 12">
 <path d="M3.5 1.5h6v5h-2M1.5 4.5h6v6h-6z" fill="none" stroke="#000" stroke-width="1.2"/>
 <path d="M1.5 1.5h6" stroke="#000" stroke-width="1.2"/>
 <path d="M17 1.5l8 8M25 1.5l-8 8" stroke="#000" stroke-width="1.4"/>
</svg>
<div class="a" style="left:1103px;top:607px;width:254px;height:72px;border:1px solid #828790;background:#fff"></div>

<!-- status -->
<div class="a" style="left:0;top:688px;width:1366px;height:1px;background:#fff"></div>
<div class="grip" style="left:3px;top:691px;height:13px"></div>
<div class="t" style="left:10px;top:692px;letter-spacing:0.79px">52, 59 (cm)</div>
<div class="t" style="left:3px;top:712px;letter-spacing:-0.1px"><b>Intersection line and axis</b>: angle = 260.511°; <b>Shift</b> - sticking angle, <b>Enter</b> - finish creation</div>
<div class="a" style="left:474px;top:710px;width:1px;height:16px;background:#c8c8c8"></div>

<!-- title bar icons -->
<svg class="a" style="left:0;top:0" width="22" height="22" viewBox="0 0 22 22">
 <path d="M10 3.3L14.3 4.3L14 7.7L16.3 9.2L11.5 18.3L2.6 13.5L4 8.3L9.2 6.9z" fill="#f3dc5a" stroke="#6f7a6a" stroke-width="0.7"/>
 <text x="10.2" y="15.3" font-family="Liberation Serif" font-size="10.5" font-style="italic" font-weight="bold" fill="#000" text-anchor="middle">S</text>
</svg>
<svg class="a" style="left:1240px;top:0" width="126" height="22" viewBox="0 0 126 22">
 <path d="M5 10.5h10" stroke="#000" stroke-width="1"/>
 <path d="M51.5 7.5h8v8h-8z M53.5 7.5v-2h8v8h-2" fill="none" stroke="#000" stroke-width="1"/>
 <path d="M96 5l10.5 10.5M106.5 5L96 15.5" stroke="#000" stroke-width="1.1"/>
</svg>

<!-- taskbar -->
<div class="a" style="left:0;top:728px;width:1366px;height:40px;background:#080c14"></div>
<div class="a" style="left:392px;top:728px;width:48px;height:38px;background:#3b3c3f"></div>
<div class="a" style="left:347px;top:766px;width:40px;height:2px;background:#76b9ed"></div>
<div class="a" style="left:392px;top:766px;width:48px;height:2px;background:#76b9ed"></div>
<div class="a" style="left:445px;top:766px;width:40px;height:2px;background:#76b9ed"></div>
<div class="a" style="left:494px;top:766px;width:40px;height:2px;background:#76b9ed"></div>
<svg class="a" style="left:0;top:728px" width="560" height="40" viewBox="0 728 560 40">
 <path d="M16 741.5l6.8-1v7h-6.8zM24 740.3l8.2-1.3v8.5h-8.2zM16 748.6h6.8v7l-6.8-1zM24 748.6h8.2v8.4l-8.2-1.2z" fill="#fff"/>
 <circle cx="74" cy="745.5" r="5.2" fill="none" stroke="#fff" stroke-width="1.2"/><path d="M70.3 749.3L64 755.8" stroke="#fff" stroke-width="1.4"/>
 <path d="M112 740.5h13v1.5M112 740.5v1.5M112 755.5h13v-1.5M112 755.5v-1.5M114.5 744.5h8v7h-8z" fill="none" stroke="#fff" stroke-width="1.1"/><path d="M127 740v15.5" stroke="#fff" stroke-width="1.1"/><rect x="126" y="743.5" width="2.2" height="2.8" fill="#fff"/>
 <path d="M160 740h7l1.5 2h13v14.5h-21.5z" fill="#f8d775"/><path d="M160 740h7l1.5 2h-8.5z" fill="#e8b84a"/>
 <path d="M164.5 756.7v-6l2-1.5h8l2 1.5v6h-3.5v-3.5h-5v3.5z" fill="#1e9ee6"/>
 <path d="M221.5 742h9.5v11.4h-9.5z" fill="#fff"/><path d="M221.5 743l4.75 3.8 4.75-3.8" fill="none" stroke="#1d7ad6" stroke-width="1.1"/>
 <path d="M208.9 739L222.1 736.6V759L208.9 757z" fill="#1779d4"/><ellipse cx="215.5" cy="747.8" rx="2.9" ry="3.9" fill="none" stroke="#fff" stroke-width="1.5"/>
 <rect x="257.3" y="736" width="23.4" height="23.7" rx="1.2" fill="#2d55d8" stroke="#8a96b0" stroke-width="0.5"/>
 <rect x="264.2" y="736.5" width="10.6" height="7" fill="#d9d9d9"/><rect x="270" y="737" width="2.6" height="6" fill="#2d55d8"/>
 <rect x="260" y="746.2" width="17" height="12.2" fill="#fff"/><path d="M261 748.9h15M261 751.8h15M261 754.7h12" stroke="#f2a8b4" stroke-width="1.3"/><path d="M260 758h17" stroke="#c0303a" stroke-width="0.8"/>
 <text x="276" y="757.6" font-family="Liberation Sans" font-size="4.5" fill="#222" text-anchor="end">01</text>
 <circle cx="318" cy="748" r="10.3" fill="#1eaaf1"/><circle cx="311" cy="741" r="4" fill="#1eaaf1"/><circle cx="325" cy="755" r="4" fill="#1eaaf1"/>
 <text x="318" y="753.5" font-family="Liberation Sans" font-weight="bold" font-size="14" fill="#fff" text-anchor="middle">S</text>
 <circle cx="366.8" cy="748" r="11" fill="#db4437"/>
 <path d="M366.8 748L357.3 753.5A11 11 0 0 1 357.3 742.5A11 11 0 0 1 366.8 737z" fill="#db4437"/>
 <path d="M366.8 748L357.3 753.5A11 11 0 0 0 366.8 759A11 11 0 0 0 376.3 753.5z" fill="#0f9d58"/>
 <path d="M366.8 748L376.3 753.5A11 11 0 0 0 377.8 748A11 11 0 0 0 376.3 742.5z" fill="#ffcd40"/>
 <path d="M366.8 748L357.3 753.5L362 748z" fill="#0f9d58"/>
 <circle cx="366.8" cy="748" r="5" fill="#fff"/><circle cx="366.8" cy="748" r="4" fill="#4285f4"/>
 <g transform="translate(400.6 730.9) scale(1.55)"><path d="M10 3.3L14.3 4.3L14 7.7L16.3 9.2L11.5 18.3L2.6 13.5L4 8.3L9.2 6.9z" fill="#f3dc5a" stroke="#888" stroke-width="0.7"/>
 <text x="10.2" y="15.3" font-family="Liberation Serif" font-size="10.5" font-style="italic" font-weight="bold" fill="#000" text-anchor="middle">S</text></g>
 <circle cx="465" cy="748" r="10.5" fill="#2ea3de"/><path d="M458 747l12-4.5-2.5 10-3-2.5-2 2.5 0.5-3.5z" fill="#fff"/>
 <circle cx="470.7" cy="754.7" r="7.5" fill="#8a8a8a"/><text x="470.7" y="758.5" font-family="Liberation Sans" font-size="10" fill="#fff" text-anchor="middle">22</text>
 <defs><linearGradient id="p3" x1="0.85" y1="0.05" x2="0.25" y2="0.95"><stop offset="0" stop-color="#3ee8f0"/><stop offset="0.3" stop-color="#7a7cf5"/><stop offset="0.55" stop-color="#9a4ce0"/><stop offset="0.78" stop-color="#ff3f7a"/><stop offset="1" stop-color="#ffa000"/></linearGradient></defs>
 <path d="M514 736C519.5 736 523 740 523 745C523 750.5 516 754.5 511 760C512.3 755 505 750.5 505 745C505 740 508.5 736 514 736z" fill="url(#p3)"/>
</svg>
<div class="a" style="left:1364px;top:728px;width:1px;height:40px;background:#4a4e55"></div>
<!-- tray -->
<svg class="a" style="left:1080px;top:728px" width="286" height="40" viewBox="1080 728 286 40">
 <circle cx="1093.8" cy="743" r="2.8" fill="none" stroke="#fff" stroke-width="1.1"/><path d="M1088.5 754c0-3 2-5 5.3-5s5.3 2 5.3 5" fill="none" stroke="#fff" stroke-width="1.1"/>
 <circle cx="1087.5" cy="747.3" r="2.2" fill="none" stroke="#fff" stroke-width="1.1"/><path d="M1083.5 755c0-2.5 1.5-4 4-4s4 1.5 4 4" fill="none" stroke="#fff" stroke-width="1.1"/>
 <path d="M1121 751.5l6-6 6 6" fill="none" stroke="#fff" stroke-width="1.2"/>
 <path d="M1147.5 744.5h11v8h-11z" fill="none" stroke="#fff" stroke-width="1.1"/><rect x="1149" y="746" width="8" height="5" fill="#fff"/><path d="M1158.5 747h1.5v3h-1.5" fill="#fff"/>
 <path d="M1143.5 748.5h3 M1144 746v5" stroke="#fff" stroke-width="1"/>
 <path d="M1170 754.5a12 12 0 0 1 12-12M1173 754.5a9 9 0 0 1 9-9M1176 754.5a6 6 0 0 1 6-6M1179 754.5a3 3 0 0 1 3-3" fill="none" stroke="#888" stroke-width="0.9"/><circle cx="1181" cy="753.5" r="1.3" fill="#fff"/>
 <path d="M1191.5 745.5h3l4-3.5v12l-4-3.5h-3z" fill="none" stroke="#fff" stroke-width="1"/>
 <path d="M1201 745.5q1.5 2.5 0 5M1203.5 743.5q3 4.5 0 9M1206 742q4 6 0 12" fill="none" stroke="#fff" stroke-width="1"/>
 <path d="M1325 740.5h16.5v12.5h-6l-2.5 3-2.5-3h-5.5z" fill="#fff"/><path d="M1328.5 744h9.5M1328.5 746.8h9.5M1328.5 749.6h6" stroke="#080c14" stroke-width="1.1"/>
</svg>
<div class="t" style="left:1218px;top:741px;color:#fff">РУС</div>
<div class="t" style="left:1268px;top:732px;color:#fff">9:15</div>
<div class="t" style="left:1252px;top:750px;color:#fff;letter-spacing:-0.45px">03.08.2018</div>
</body></html>
